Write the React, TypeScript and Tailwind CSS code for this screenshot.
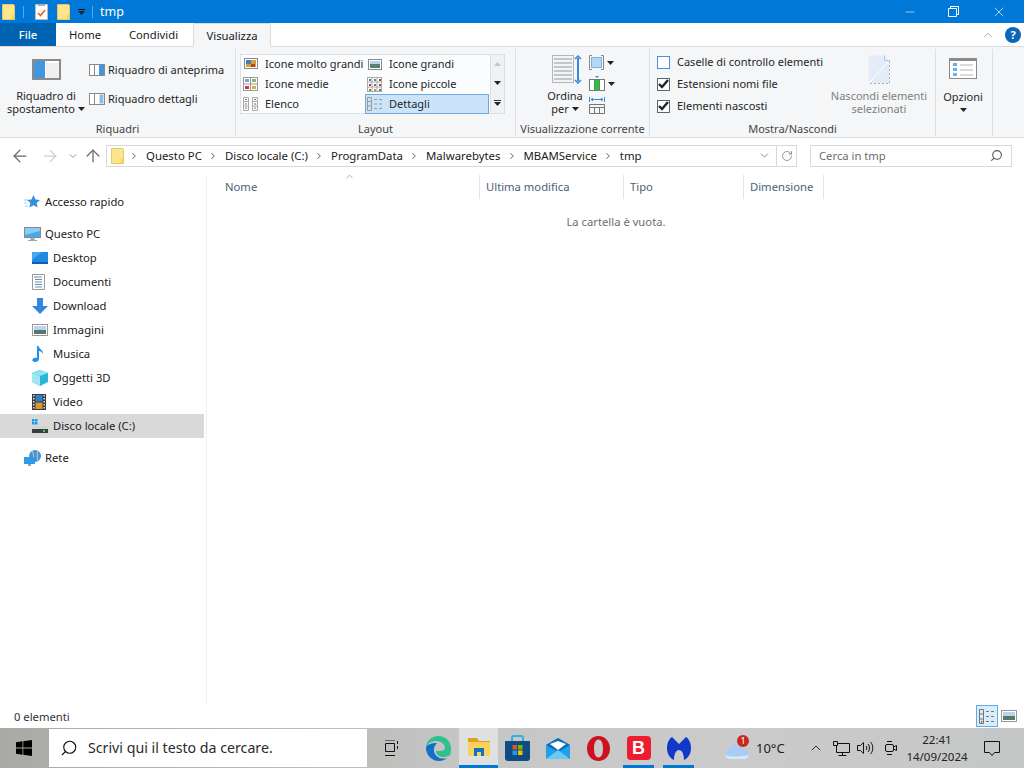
import React from 'react';
import { ArrowLeft, ArrowRight, ArrowUp, ChevronDown, ChevronRight, ChevronUp, RotateCw, Search, Minus, X } from 'lucide-react';

const Caret = ({ className = '' }: { className?: string }) => (
  <svg width="7" height="4" viewBox="0 0 7 4" className={className}><path d="M0 0h7L3.5 4z" fill="#222" /></svg>
);

const FolderIcon = ({ w = 13, h = 16 }: { w?: number; h?: number }) => (
  <svg width={w} height={h} viewBox="0 0 13 16">
    <path d="M.5.5h11l1 1v14H.5z" fill="#fde58c" stroke="#e8c768" />
    <path d="M10 11h2.5v4.5H10z" fill="#f6cf62" />
  </svg>
);

const PaneIcon = ({ right = 'blue' }: { right?: 'blue' | 'lines' }) => (
  <svg width="16" height="12" viewBox="0 0 16 12">
    <rect x=".5" y=".5" width="15" height="11" fill="#fff" stroke="#8a8a8a" />
    <path d="M5.5 1v10" stroke="#8a8a8a" />
    <rect x="10" y="1" width="5" height="10" fill={right === 'blue' ? '#3f97e0' : '#cfe3f6'} />
    {right === 'lines' && <path d="M11 3h3M11 5h3M11 7h3M11 9h3" stroke="#3f97e0" />}
  </svg>
);

const GalleryIcon = ({ kind }: { kind: string }) => {
  if (kind === 'xl')
    return (
      <svg width="14" height="12" viewBox="0 0 14 12"><rect x=".5" y=".5" width="13" height="10" fill="#fff" stroke="#8a8a8a" /><rect x="2" y="2" width="10" height="7" fill="#d8a030" /><path d="M2 2h5v4H2z" fill="#3f7fc0" /><path d="M7 6h4v3H7z" fill="#b84030" /></svg>
    );
  if (kind === 'l')
    return (
      <svg width="14" height="11" viewBox="0 0 14 11"><rect x=".5" y=".5" width="13" height="10" fill="#fff" stroke="#8a8a8a" /><rect x="2" y="2" width="10" height="3" fill="#b9d5ee" /><rect x="2" y="5" width="10" height="4" fill="#5d7f6d" /></svg>
    );
  if (kind === 'm')
    return (
      <svg width="15" height="14" viewBox="0 0 15 14"><rect x=".5" y=".5" width="14" height="13" fill="#fff" stroke="#999" /><path d="M7.5 1v12M1 7h13" stroke="#999" /><rect x="2" y="2" width="4" height="3" fill="#7fa8c8" /><rect x="9" y="2" width="4" height="3" fill="#8cb080" /><rect x="2" y="9" width="4" height="3" fill="#c84030" /><rect x="9" y="9" width="4" height="3" fill="#d8b040" /></svg>
    );
  if (kind === 's')
    return (
      <svg width="15" height="15" viewBox="0 0 15 15"><rect x=".5" y=".5" width="14" height="14" fill="#fff" stroke="#aaa" /><path d="M5 1v13M10 1v13M1 5h13M1 10h13" stroke="#aaa" /><rect x="2" y="2" width="2" height="2" fill="#4a7fb0" /><rect x="7" y="2" width="2" height="2" fill="#5a9060" /><rect x="12" y="2" width="2" height="2" fill="#c04030" /><rect x="2" y="7" width="2" height="2" fill="#c04030" /><rect x="7" y="7" width="2" height="2" fill="#4a7fb0" /><rect x="12" y="7" width="2" height="2" fill="#c04030" /><rect x="2" y="12" width="2" height="2" fill="#5a9060" /><rect x="7" y="12" width="2" height="2" fill="#d09030" /><rect x="12" y="12" width="2" height="2" fill="#4a7fb0" /></svg>
    );
  if (kind === 'list')
    return (
      <svg width="15" height="14" viewBox="0 0 15 14" fill="none" stroke="#aaa"><path d="M.5.5h5v13h-5zM.5 4.500h5M.5 9h5M9.500.5h5v13h-5zM9.500 4.500h5M9.500 9h5" /><path d="M2 2.500h2M2 7h2M2 11h2M11 2.500h2M11 7h2M11 11h2" stroke="#777" /></svg>
    );
  return (
    <svg width="15" height="14" viewBox="0 0 15 14" fill="none" stroke="#999"><path d="M.5.5h4v13h-4zM.5 4.500h4M.5 9h4M7 2.500h3M12 2.500h3M7 7h3M12 7h3M7 11.500h3M12 11.500h3" /></svg>
  );
};

const GalleryItem = ({ kind, label, active }: { kind: string; label: string; active?: boolean }) => (
  <div className={`flex h-5 w-[124px] items-center gap-[7px] pl-[2px] ${active ? 'bg-[#cce4f9] outline outline-1 -outline-offset-1 outline-[#6fa8dc]' : ''}`}>
    <span className="flex w-[15px] justify-center"><GalleryIcon kind={kind} /></span>
    <span className="whitespace-nowrap">{label}</span>
  </div>
);

const CheckRow = ({ label, checked }: { label: string; checked?: boolean }) => (
  <div className="flex h-[22px] items-center gap-[7px]">
    <span className={`flex h-[13px] w-[13px] items-center justify-center border bg-white ${checked ? 'border-[#5a6478]' : 'border-[#4a90e2]'}`}>
      {checked && (
        <svg width="11" height="10" viewBox="0 0 11 10"><path d="M1 5l3 3 6-7" fill="none" stroke="#222" strokeWidth="2.400" /></svg>
      )}
    </span>
    <span className="whitespace-nowrap">{label}</span>
  </div>
);

const RibbonGroup = ({ width, label, children }: { width: string; label: string; children: React.ReactNode }) => (
  <div className={`${width} flex h-[87px] shrink-0 flex-col border-r border-[#dcdfe3]`}>
    <div className="flex h-[70px] flex-1">{children}</div>
    <div className="h-[17px] whitespace-nowrap text-center leading-[20px] text-[#444]">{label}</div>
  </div>
);

const NavIcon = ({ kind }: { kind: string }) => {
  if (kind === 'star')
    return (
      <svg width="16" height="16" viewBox="0 0 16 16"><path d="M9.500 1l2 4.500 4.500.5-3.400 3 1 4.600-4.100-2.400-4.100 2.400 1-4.600L3 6l4.500-.5z" fill="#2f8fe0" /><path d="M0 6h4M0 9h3M1 12h3" stroke="#9ccbf0" /></svg>
    );
  if (kind === 'pc')
    return (
      <svg width="17" height="15" viewBox="0 0 17 15"><rect x=".5" y=".5" width="16" height="10" fill="#4aa8ec" stroke="#7d8a96" /><path d="M1 1h15v3L1 8z" fill="#8ccbf5" /><path d="M7 11h3v2H7zM4 13.500h9" fill="#9aa4ad" stroke="#9aa4ad" /></svg>
    );
  if (kind === 'desktop')
    return (
      <svg width="16" height="12" viewBox="0 0 16 12"><rect width="16" height="12" fill="#1e8ae6" /><path d="M0 10h16v2H0z" fill="#0c5fae" /><path d="M0 0h10L0 8z" fill="#49a9f0" /></svg>
    );
  if (kind === 'doc')
    return (
      <svg width="13" height="16" viewBox="0 0 13 16"><path d="M.5.5h12v15H.5z" fill="#fff" stroke="#999" /><path d="M4 3h6M3 5.500h7M3 8h7M3 10.500h7M3 13h7" stroke="#6a8fb0" /><path d="M2 2h3v2H2z" fill="#b0c4d8" /></svg>
    );
  if (kind === 'down')
    return (
      <svg width="16" height="16" viewBox="0 0 16 16"><path d="M5 0h6v8h5l-8 8-8-8h5z" fill="#3586dc" /></svg>
    );
  if (kind === 'img')
    return (
      <svg width="16" height="12" viewBox="0 0 16 12"><rect x=".5" y=".5" width="15" height="11" fill="#fff" stroke="#999" /><rect x="2" y="2" width="12" height="4" fill="#b9d5ee" /><rect x="2" y="6" width="12" height="4" fill="#55786a" /></svg>
    );
  if (kind === 'music')
    return (
      <svg width="12" height="16" viewBox="0 0 12 16"><path d="M5 0h1.500c.5 3 5 4 4.500 8-.8-2-3-3-4-3v8c0 2-2 3-4 3s-3-1-2.500-2.500C1 12 3 11.500 5 12z" fill="#1e90ee" /></svg>
    );
  if (kind === '3d')
    return (
      <svg width="16" height="16" viewBox="0 0 16 16"><path d="M8 0l8 3v9l-8 4-8-4V3z" fill="#27b5d8" /><path d="M0 3l8 3 8-3-8-3z" fill="#8be4ef" /><path d="M0 3l8 3v10l-8-4z" fill="#a4e6ee" /></svg>
    );
  if (kind === 'video')
    return (
      <svg width="14" height="16" viewBox="0 0 14 16"><rect width="14" height="16" fill="#3a3a3a" /><path d="M1 1h1.500v1.500H1zM1 4h1.500v1.500H1zM1 7h1.500v1.500H1zM1 10h1.500v1.500H1zM1 13h1.500v1.500H1zM11.500 1H13v1.500h-1.500zM11.500 4H13v1.500h-1.500zM11.500 7H13v1.500h-1.500zM11.500 10H13v1.500h-1.500zM11.500 13H13v1.500h-1.500z" fill="#ddd" /><rect x="3.500" y="1" width="7" height="6.500" fill="#2f7fd0" /><rect x="3.500" y="8.500" width="7" height="6.500" fill="#d89a30" /></svg>
    );
  if (kind === 'disk')
    return (
      <svg width="16" height="14" viewBox="0 0 16 14"><path d="M0 0h2.500v2.500H0zM3 0h2.500v2.500H3zM0 3h2.500v2.500H0zM3 3h2.500v2.500H3z" fill="#1e9be8" /><path d="M2 7h12l2 3H0z" fill="#d0d4d8" /><rect y="10" width="16" height="4" fill="#3c3c3c" /><rect x="11" y="11" width="2" height="2" fill="#3fd060" /></svg>
    );
  return (
    <svg width="18" height="16" viewBox="0 0 18 16"><circle cx="11" cy="6" r="6" fill="#4d93cf" /><path d="M8 1c2 3 2 7 0 10M14 1c-1 3-1 7 0 10" stroke="#a9d2ef" fill="none" /><rect y="7" width="11" height="7" fill="#2f9be8" /><path d="M4 14h3v2H4z" fill="#9aa4ad" /></svg>
  );
};

const NavItem = ({ kind, label, child, active }: { kind: string; label: string; child?: boolean; active?: boolean }) => (
  <div className={`flex h-6 w-[204px] items-center ${active ? 'bg-[#d9d9d9]' : ''} ${child ? 'pl-[32px]' : 'pl-[24px]'}`}>
    <span className="flex w-[21px] justify-start"><NavIcon kind={kind} /></span>
    <span className="whitespace-nowrap text-[#1a1a1a]">{label}</span>
  </div>
);

const Crumb = ({ label }: { label: string }) => (
  <>
    <ChevronRight size={10} strokeWidth={2.500} color="#777" className="shrink-0" />
    <span className="ml-px whitespace-nowrap">{label}</span>
  </>
);

const HeaderCell = ({ width, label }: { width: string; label: string }) => (
  <div className={`${width} flex h-[24px] shrink-0 items-center border-r border-[#e5e5e5] pl-[6px] text-[#4c607a]`}>{label}</div>
);

export default function App() {
  return (
    <div className="flex h-[768px] w-[1024px] flex-col overflow-hidden bg-white text-[11.25px] leading-4 text-[#1a1a1a] [font-family:'Noto_Sans',sans-serif]">
      {/* title bar */}
      <div className="flex h-[23px] shrink-0 items-center bg-[#0078d7] text-white">
        <span className="ml-[2px]"><FolderIcon /></span>
        <span className="ml-[8px] h-[12px] w-px bg-[#5aa9e6]" />
        <svg width="13" height="16" viewBox="0 0 13 16" className="ml-[11px]"><path d="M.5.5h12v15H.5z" fill="#fff" stroke="#bbb" /><path d="M3 9l2.500 2.500L10 6" stroke="#e8602a" strokeWidth="1.600" fill="none" /><path d="M3 .5h7v1.500H3z" fill="#aaa" /></svg>
        <span className="ml-[9px]"><FolderIcon /></span>
        <span className="ml-[8px] flex flex-col items-center"><span className="mb-[1px] h-px w-[7px] bg-[#111]" /><Caret /></span>
        <span className="ml-[7px] h-[12px] w-px bg-[#5aa9e6]" />
        <span className="ml-[7px] text-[12.5px]">tmp</span>
        <div className="ml-auto flex items-center">
          <Minus size={14} strokeWidth={1} color="#fff" className="mr-[31px]" />
          <svg width="11" height="11" viewBox="0 0 11 11" fill="none" stroke="#fff" className="mr-[32px]"><path d="M.5 2.500h8v8h-8zM2.500 2.500v-2h8v8h-2" /></svg>
          <X size={16} strokeWidth={1} color="#fff" className="mr-[17px]" />
        </div>
      </div>

      {/* tabs */}
      <div className="flex h-[23px] shrink-0 items-stretch">
        <div className="flex w-[56px] items-center justify-center bg-[#0063b1] font-medium text-white">File</div>
        <div className="flex w-[58px] items-center justify-center">Home</div>
        <div className="flex w-[79px] items-center justify-center">Condividi</div>
        <div className="z-10 flex h-[24px] w-[78px] items-center justify-center border-x border-t border-[#dadbdc] bg-[#f5f6f7]">Visualizza</div>
        <div className="ml-auto flex items-center">
          <ChevronUp size={14} strokeWidth={1.500} color="#999" className="mr-[10px]" />
          <span className="mr-[3px] flex h-[16px] w-[16px] items-center justify-center rounded-full bg-[#0a66b8] text-[11px] font-bold text-white">?</span>
        </div>
      </div>

      {/* ribbon */}
      <div className="flex h-[92px] shrink-0 border-y border-[#dadbdc] bg-[#f5f6f7] pt-[2px] pb-[2px] text-[11px] text-[#262626]">
        <RibbonGroup width="w-[236px]" label="Riquadri">
          <div className="flex w-[89px] flex-col items-center pl-[3px] pt-[10px] text-center leading-[13px]">
            <svg width="29" height="21" viewBox="0 0 29 21" className="mb-[9px]"><rect x="1" y="1" width="27" height="19" fill="#fff" stroke="#8a8a8a" strokeWidth="2" /><rect x="2" y="2" width="11" height="17" fill="#3f97e0" /><path d="M14 4h13v15H14z" fill="#eef0f2" /></svg>
            <span className="whitespace-nowrap">Riquadro di</span>
            <span className="flex items-center gap-[3px] whitespace-nowrap">spostamento <Caret /></span>
          </div>
          <div className="flex flex-col pt-[10px]">
            <div className="flex h-[22px] items-center gap-[3px]"><PaneIcon /><span className="whitespace-nowrap">Riquadro di anteprima</span></div>
            <div className="mt-[7px] flex h-[22px] items-center gap-[3px]"><PaneIcon right="lines" /><span className="whitespace-nowrap">Riquadro dettagli</span></div>
          </div>
        </RibbonGroup>

        <RibbonGroup width="w-[280px]" label="Layout">
          <div className="ml-[4px] mt-[5px] flex h-[60px] w-[265px]">
            <div className="w-[251px] border border-[#dcdfe3] bg-[#fbfcfd]">
              <div className="-mt-px flex"><GalleryItem kind="xl" label="Icone molto grandi" /><GalleryItem kind="l" label="Icone grandi" /></div>
              <div className="flex"><GalleryItem kind="m" label="Icone medie" /><GalleryItem kind="s" label="Icone piccole" /></div>
              <div className="flex"><GalleryItem kind="list" label="Elenco" /><GalleryItem kind="det" label="Dettagli" active /></div>
            </div>
            <div className="flex w-[14px] flex-col items-center justify-around border-y border-r border-[#dcdfe3] bg-[#f0f1f2]">
              <Caret className="rotate-180 opacity-20" />
              <Caret />
              <span className="flex flex-col items-center"><span className="mb-[1px] h-px w-[7px] bg-[#333]" /><Caret /></span>
            </div>
          </div>
        </RibbonGroup>

        <RibbonGroup width="w-[134px]" label="Visualizzazione corrente">
          <div className="ml-[30px] flex w-[38px] flex-col items-center pt-[6px] text-center leading-[13px]">
            <svg width="30" height="29" viewBox="0 0 30 29" className="mb-[5px] ml-[3px] shrink-0"><rect x=".5" y=".5" width="21" height="27" fill="#f2f4f5" stroke="#b0b6bb" /><path d="M2 4h18M2 8h18M2 12h18M2 16h18M2 20h18M2 24h18" stroke="#c2c7cc" strokeWidth="2" /><path d="M26 3v23" stroke="#3586dc" strokeWidth="2" /><path d="M23 4l3-3 3 3M23 25l3 3 3-3" fill="none" stroke="#3586dc" strokeWidth="1.500" /></svg>
            <span>Ordina</span>
            <span className="flex items-center gap-[3px]">per <Caret /></span>
          </div>
          <div className="ml-[5px] flex flex-col gap-[6px] pt-[6px]">
            <div className="flex items-center gap-[3px]"><svg width="15" height="15" viewBox="0 0 15 15"><path d="M3 .5H.5v14H3M12 .5h2.500v14H12" fill="none" stroke="#888" /><rect x="2.500" y="2.500" width="10" height="10" fill="#b3d7f5" stroke="#7ab3e0" /></svg><Caret /></div>
            <div className="flex items-center gap-[3px]"><svg width="16" height="15" viewBox="0 0 16 15"><path d="M6 0h4L8 2z" fill="#3586dc" /><rect x=".5" y="3.500" width="15" height="11" fill="#fff" stroke="#777" /><rect x="6" y="4" width="4" height="10" fill="#1dc93a" /><path d="M5.500 4v10M10.500 4v10" stroke="#777" /></svg><Caret /></div>
            <svg width="16" height="17" viewBox="0 0 16 17" fill="none"><path d="M.5 0v5M15.500 0v5M2 2.500h12" stroke="#3586dc" /><path d="M4 1L2 2.500 4 4M12 1l2 1.500L12 4" stroke="#3586dc" /><path d="M.5 7.500h15v9H.5zM1 10.500h14M5.500 11v5M10.500 11v5" stroke="#777" /></svg>
          </div>
        </RibbonGroup>

        <RibbonGroup width="w-[286px]" label="Mostra/Nascondi">
          <div className="ml-[7px] flex w-[182px] flex-col pt-[2px]">
            <CheckRow label="Caselle di controllo elementi" />
            <CheckRow label="Estensioni nomi file" checked />
            <CheckRow label="Elementi nascosti" checked />
          </div>
          <div className="ml-[-12px] flex w-[104px] flex-col items-center pt-[6px] text-center leading-[13px] text-[#808080]">
            <svg width="22" height="29" viewBox="0 0 22 29" className="mb-[5px]"><path d="M.5.500h16l5 5v23H.5z" fill="#e4ecf7" /><path d="M.5 28.500l21-23" stroke="#fff" /><path d="M21.500 6v22.500H1" stroke="#9fb0c4" strokeDasharray="2 2" fill="none" /><path d="M16.500.5v5h5" fill="none" stroke="#b8c6d8" /></svg>
            <span className="whitespace-nowrap">Nascondi elementi</span>
            <span>selezionati</span>
          </div>
        </RibbonGroup>

        <RibbonGroup width="w-[57px]" label="">
          <div className="flex w-full flex-col items-center pr-[2px] pt-[9px] text-center leading-[13px]">
            <svg width="28" height="21" viewBox="0 0 28 21" className="mb-[11px]"><rect x=".5" y=".5" width="27" height="20" fill="#fff" stroke="#8a8a8a" /><path d="M1 1h26v2H1z" fill="#8a8a8a" /><path d="M4 5h4v3H4zM4 10h4v3H4zM4 15h4v3H4z" fill="#6bb0ea" /><path d="M11 7h13M11 12h13M11 17h13" stroke="#b5b5b5" /></svg>
            <span>Opzioni</span>
            <Caret className="mt-[5px]" />
          </div>
        </RibbonGroup>
      </div>

      {/* address row */}
      <div className="flex h-[37px] shrink-0 items-center pb-[2px]">
        <ArrowLeft size={20} strokeWidth={1.500} color="#666" className="ml-[10px]" />
        <ArrowRight size={20} strokeWidth={1.500} color="#d0d0d0" className="ml-[10px]" />
        <ChevronDown size={12} strokeWidth={2} color="#999" className="ml-[7px]" />
        <ArrowUp size={20} strokeWidth={1.500} color="#666" className="ml-[4px]" />
        <div className="ml-[3px] flex h-[22px] w-[691px] items-center border border-[#d9d9d9] pl-[4px] text-[11.4px] text-[#1a1a1a]">
          <FolderIcon />
          <div className="ml-[5px] flex items-center gap-[6px]">
            <Crumb label="Questo PC" />
            <Crumb label="Disco locale (C:)" />
            <Crumb label="ProgramData" />
            <Crumb label="Malwarebytes" />
            <Crumb label="MBAMService" />
            <Crumb label="tmp" />
          </div>
          <ChevronDown size={13} strokeWidth={1.500} color="#777" className="ml-auto mr-[5px]" />
          <span className="flex h-full w-[20px] items-center justify-center border-l border-[#d9d9d9]"><RotateCw size={12} strokeWidth={1.500} color="#777" /></span>
        </div>
        <div className="ml-[13px] flex h-[22px] w-[202px] items-center justify-between border border-[#d9d9d9] pl-[8px] pr-[8px] text-[#6d6d6d]">
          <span>Cerca in tmp</span>
          <Search size={13} strokeWidth={2} color="#555" className="-scale-x-100" />
        </div>
      </div>

      {/* main */}
      <div className="flex min-h-0 flex-1">
        <div className="w-[207px] shrink-0 border-r border-[#f0f0f0] pt-[15px]">
          <NavItem kind="star" label="Accesso rapido" />
          <div className="h-2" />
          <NavItem kind="pc" label="Questo PC" />
          <NavItem kind="desktop" label="Desktop" child />
          <NavItem kind="doc" label="Documenti" child />
          <NavItem kind="down" label="Download" child />
          <NavItem kind="img" label="Immagini" child />
          <NavItem kind="music" label="Musica" child />
          <NavItem kind="3d" label="Oggetti 3D" child />
          <NavItem kind="video" label="Video" child />
          <NavItem kind="disk" label="Disco locale (C:)" child active />
          <div className="h-2" />
          <NavItem kind="net" label="Rete" />
        </div>
        <div className="relative flex-1">
          <ChevronUp size={11} strokeWidth={1.500} color="#888" className="absolute left-[137px] top-[-4px]" />
          <div className="flex pl-[12px]">
            <HeaderCell width="w-[261px]" label="Nome" />
            <HeaderCell width="w-[144px]" label="Ultima modifica" />
            <HeaderCell width="w-[120px]" label="Tipo" />
            <HeaderCell width="w-[80px]" label="Dimensione" />
          </div>
          <div className="mt-[15px] w-[818px] text-center text-[#6d6d6d]">La cartella è vuota.</div>
        </div>
      </div>

      {/* status bar */}
      <div className="flex h-[24px] shrink-0 items-center">
        <span className="ml-[14px] pt-[2px] text-[#333]">0 elementi</span>
        <div className="ml-auto flex items-center">
          <span className="flex h-[22px] w-[22px] items-center justify-center border border-[#5ab0e6] bg-[#d8ecf9]">
            <svg width="16" height="15" viewBox="0 0 16 15" fill="none" stroke="#777"><path d="M.5.5h4v14h-4zM.5 5h4M.5 10h4M7 2.500h3M12 2.500h3M7 7.500h3M12 7.500h3M7 12.500h3M12 12.500h3" /><path d="M2 12h1.500v1.500H2z" fill="#d03030" stroke="none" /></svg>
          </span>
          <span className="ml-[3px] mr-[7px] flex w-[16px] justify-center"><NavIcon kind="img" /></span>
        </div>
      </div>

      {/* taskbar */}
      <div className="flex h-[40px] shrink-0 items-center bg-[linear-gradient(90deg,#a9a9a5_0%,#b5b6b2_20%,#c4c5c4_45%,#cbcbcb_70%,#c5c6c6_100%)]">
        <svg width="16" height="16" viewBox="0 0 16 16" className="ml-[16px] shrink-0"><path d="M0 2.200l6.500-.9v6.200H0zM7.300 1.200L16 0v7.500H7.300zM0 8.500h6.500v6.200L0 13.800zM7.300 8.500H16V16l-8.700-1.200z" fill="#000" /></svg>
        <div className="ml-[17px] flex h-[38px] w-[318px] items-center bg-white pl-[11px] text-[14.2px] text-[#2b2b2b]">
          <Search size={18} strokeWidth={1.500} color="#111" className="-scale-x-100" />
          <span className="ml-[10px] whitespace-nowrap">Scrivi qui il testo da cercare.</span>
        </div>
        <svg width="16" height="16" viewBox="0 0 16 16" fill="none" stroke="#111" className="ml-[17px] shrink-0"><path d="M1 0h10M1 15.500h10M1.500 3.500h9v8h-9zM13.500 1v3M13.500 6v3" /></svg>
        <svg width="25" height="25" viewBox="0 0 25 25" className="ml-[26px] shrink-0"><path d="M12.500 0C6 0 .5 4.500 0 11c2-4 6-6 10-6 5 0 9 3 9 7 0 2-2 3-4 3h-5c0 4 4 6 8 6 2 0 4-1 6-2 1-2 1-5 1-7C25 5 19 0 12.500 0z" fill="#30c090" /><path d="M0 11c-.5 7 5 14 13 14 3 0 6-1 8-3-6 2-12-1-13-7-.5-3 1-6 3-8C6 7 2 8 0 11z" fill="#0f70c8" /></svg>
        <div className="ml-[8px] flex h-full w-[39px] shrink-0 items-center justify-center border-b-[3px] border-[#0078d7] bg-[#dfe0e0]">
          <svg width="22" height="18" viewBox="0 0 22 18"><path d="M0 0h9l2 3h11v4H0z" fill="#e0a020" /><path d="M0 4h22v14H0z" fill="#fcd05c" /><path d="M6 10h10v8h-3v-4H9v4H6z" fill="#0f70c8" /></svg>
        </div>
        <svg width="25" height="26" viewBox="0 0 25 26" className="ml-[7px] shrink-0"><path d="M7 6V3c0-1 1-2 2-2h7c1 0 2 1 2 2v3" fill="none" stroke="#2bb0e8" strokeWidth="2" /><path d="M0 6h25v17c0 2-1 3-3 3H3c-2 0-3-1-3-3z" fill="#0f4c81" /><rect x="7.500" y="10" width="4.500" height="4.500" fill="#e8502a" /><rect x="13" y="10" width="4.500" height="4.500" fill="#7ab800" /><rect x="7.500" y="15.500" width="4.500" height="4.500" fill="#1e9be8" /><rect x="13" y="15.500" width="4.500" height="4.500" fill="#fbbc05" /></svg>
        <svg width="24" height="21" viewBox="0 0 24 21" className="ml-[16px] shrink-0"><path d="M0 7l12-7 12 7v14H0z" fill="#1ea0ea" /><path d="M0 7l12-7 12 7-12 7z" fill="#0f6cbd" /><path d="M4 6l8-3 8 3-8 6z" fill="#fff" /><path d="M0 21l12-9 12 9z" fill="#6bc8f5" /></svg>
        <svg width="23" height="25" viewBox="0 0 23 25" className="ml-[17px] shrink-0"><path fillRule="evenodd" d="M11.500 0C18 0 23 5.500 23 12.500S18 25 11.500 25 0 19.500 0 12.500 5 0 11.500 0zm0 3.500c-3 0-4.500 4-4.500 9s1.500 9 4.500 9 4.500-4 4.500-9-1.500-9-4.500-9z" fill="#cf1020" /></svg>
        <div className="ml-[13px] flex h-full w-[31px] shrink-0 items-center justify-center border-b-[3px] border-[#0078d7] pt-[3px]">
          <span className="flex h-[24px] w-[24px] items-center justify-center rounded-[4px] bg-[#ed1c2e] text-[18px] font-bold text-white [font-family:'Liberation_Sans',sans-serif]">B</span>
        </div>
        <div className="ml-[9px] flex h-full w-[31px] shrink-0 items-center justify-center border-b-[3px] border-[#0078d7] pt-[3px]">
          <svg width="24" height="23" viewBox="0 0 24 23"><path d="M5 0l7 7 7-7c3 2 5 6 5 11 0 6-3 10-7 12 0-6-2-10-5-10S7 17 7 23C3 21 0 17 0 11 0 6 2 2 5 0z" fill="#1238c8" /></svg>
        </div>
        <div className="relative ml-[31px] shrink-0">
          <svg width="24" height="15" viewBox="0 0 24 15" className="mt-[6px]"><path d="M5 15a5 5 0 01-1-9.800C5 2 8 0 11 0c3 0 6 2 7 5a5 5 0 011 10z" fill="#a9cdf2" /><path d="M0 11c4 2 14 2 24 0-1 3-3 4-5 4H5c-2 0-4-1-5-4z" fill="#d8e8f8" /></svg>
          <span className="absolute left-[12px] top-[-3px] flex h-[12px] w-[12px] items-center justify-center rounded-full bg-[#c42b1c] text-[9px] leading-none text-white">1</span>
        </div>
        <span className="ml-[7px] w-[29px] shrink-0 whitespace-nowrap text-[13px] text-[#222]">10°C</span>
        <ChevronUp size={16} strokeWidth={1.300} color="#111" className="ml-[23px] shrink-0" />
        <svg width="17" height="15" viewBox="0 0 17 15" fill="none" stroke="#111" className="ml-[9px] shrink-0"><path d="M.5.5h4v4h-4zM4.500 2.500h12v9h-13v-7M9.500 11.500v3M5.500 14.500h8" /></svg>
        <svg width="17" height="14" viewBox="0 0 17 14" fill="none" stroke="#111" className="ml-[7px] shrink-0"><path d="M.5 4.500h3l3-3v11l-3-3h-3zM9 5c1 1 1 3 0 4M11 3c2 2 2 6 0 8M13.500 1c3 3 3 9 0 12" /></svg>
        <svg width="12" height="16" viewBox="0 0 12 16" fill="none" stroke="#111" className="ml-[11px] shrink-0"><rect x=".5" y="4.500" width="8" height="7" rx="1.500" /><path d="M8.500 7l3-1.500v5l-3-1.500M2 1.500h5M2 14.500h5" /></svg>
        <div className="flex w-[80px] shrink-0 flex-col items-center text-[11.5px] leading-[17px] text-[#222]">
          <span>22:41</span>
          <span>14/09/2024</span>
        </div>
        <svg width="16" height="15" viewBox="0 0 16 15" fill="none" stroke="#111" className="ml-[7px] shrink-0"><path d="M.5.5h15v11h-5L8 14.500 5.500 11.500h-5z" /></svg>
      </div>
    </div>
  );
}
